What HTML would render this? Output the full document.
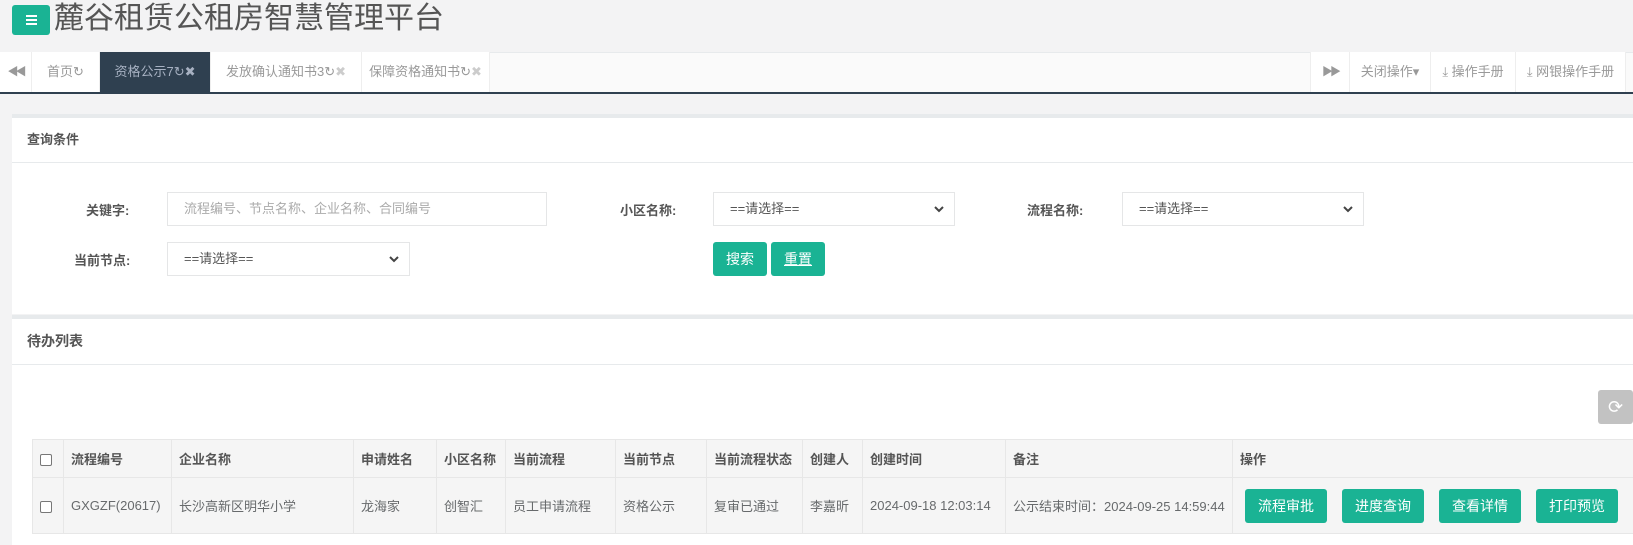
<!DOCTYPE html>
<html><head><meta charset="utf-8"><style>
*{box-sizing:border-box;margin:0;padding:0}
body{width:1633px;height:534px;overflow:hidden;background:#f3f3f4;font-family:"Liberation Sans","Noto Sans CJK SC",sans-serif;color:#676a6c;font-size:13px;position:relative}
.abs{position:absolute}
.hdr-btn{left:12px;top:5px;width:38px;height:30px;background:#1ab394;border-radius:3px}
.hdr-btn i{position:absolute;left:14px;width:11px;height:2px;background:#fff}
.title{left:54px;top:0px;font-size:30px;line-height:38px;color:#555}
.tabbar{left:0;top:52px;width:1633px;height:40px;background:#fafafa;border-top:1px solid #e7eaec}
.line{left:0;top:92px;width:1633px;height:2px;background:#2f4050}
.tab{top:52px;height:40px;line-height:40px;text-align:center;border-right:1px solid #eee;color:#999;font-size:13px;background:#fff}
.tab.act{background:#2f4050;color:#a7b1c2}
.panel{left:12px;width:1621px;background:#fff;border-top:4px solid #e7eaec}
.ph{position:absolute;left:15px;font-weight:bold;font-size:13px;color:#555}
.lbl{font-weight:bold;color:#555;font-size:13px}
.inp{border:1px solid #e5e6e7;background:#fff;height:34px;line-height:32px;padding-left:16px;color:#555;font-size:13px}
.inp.ph2{color:#aaa}
.arr{position:absolute;right:10px;top:12px}
.gbtn{background:#1ab394;color:#fff;border-radius:3px;text-align:center;font-size:14px}
table{border-collapse:collapse;table-layout:fixed;font-size:13px;color:#676a6c}
td{border:1px solid #e7e7e7;background:#f5f5f5;padding:0 7px;white-space:nowrap;overflow:hidden}
tr.h td{height:38px;font-weight:bold;color:#555}
tr.d td{height:56px}
.cb{width:12px;height:12px;border:1px solid #777;border-radius:2px;background:#fff;display:inline-block;vertical-align:middle}
.ab{display:inline-block;width:82px;height:34px;line-height:34px;margin-right:15px;font-size:14px}
</style></head><body>
<div class="abs hdr-btn"><i style="top:10px"></i><i style="top:14px"></i><i style="top:18px"></i></div>
<div class="abs title">麓谷租赁公租房智慧管理平台</div>
<div class="abs tabbar"></div>
<div class="abs tab" style="left:0;width:32px;font-size:11px;letter-spacing:-3px">◀◀</div>
<div class="abs tab" style="left:32px;width:68px">首页↻</div>
<div class="abs tab act" style="left:100px;width:111px">资格公示7↻✖</div>
<div class="abs tab" style="left:211px;width:151px">发放确认通知书3↻<span style="color:#ccc">✖</span></div>
<div class="abs tab" style="left:362px;width:128px">保障资格通知书↻<span style="color:#ccc">✖</span></div>
<div class="abs tab" style="left:1310px;width:40px;font-size:11px;letter-spacing:-3px;border-left:1px solid #eee">▶▶</div>
<div class="abs tab" style="left:1350px;width:81px">关闭操作▾</div>
<div class="abs tab" style="left:1431px;width:85px">⤓ 操作手册</div>
<div class="abs tab" style="left:1516px;width:110px">⤓ 网银操作手册</div>
<div class="abs line"></div>

<div class="abs panel" style="top:114px;height:200px">
  <div class="ph" style="top:11px">查询条件</div>
  <div class="abs" style="left:0;top:44px;width:1621px;height:1px;background:#e7eaec"></div>
</div>
<div class="abs lbl" style="left:86px;top:200px">关键字:</div>
<div class="abs inp ph2" style="left:167px;top:192px;width:380px">流程编号、节点名称、企业名称、合同编号</div>
<div class="abs lbl" style="left:620px;top:200px">小区名称:</div>
<div class="abs inp" style="left:713px;top:192px;width:242px">==请选择==<svg class="arr" width="10" height="8" viewBox="0 0 10 8"><path d="M1 2l4 4 4-4" stroke="#444" stroke-width="2" fill="none"/></svg></div>
<div class="abs lbl" style="left:1027px;top:200px">流程名称:</div>
<div class="abs inp" style="left:1122px;top:192px;width:242px">==请选择==<svg class="arr" width="10" height="8" viewBox="0 0 10 8"><path d="M1 2l4 4 4-4" stroke="#444" stroke-width="2" fill="none"/></svg></div>
<div class="abs lbl" style="left:74px;top:250px">当前节点:</div>
<div class="abs inp" style="left:167px;top:242px;width:243px">==请选择==<svg class="arr" width="10" height="8" viewBox="0 0 10 8"><path d="M1 2l4 4 4-4" stroke="#444" stroke-width="2" fill="none"/></svg></div>
<div class="abs gbtn" style="left:713px;top:242px;width:54px;height:34px;line-height:34px">搜索</div>
<div class="abs gbtn" style="left:771px;top:242px;width:54px;height:34px;line-height:34px;text-decoration:underline">重置</div>

<div class="abs panel" style="top:315px;height:230px">
  <div class="ph" style="top:12px;font-size:14px">待办列表</div>
  <div class="abs" style="left:0;top:45px;width:1621px;height:1px;background:#e7eaec"></div>
</div>
<div class="abs" style="left:1598px;top:390px;width:35px;height:34px;background:#c2c2c2;border-radius:3px;color:#fff;text-align:center;line-height:34px;font-size:18px">⟳</div>

<table class="abs" style="left:32px;top:439px;width:1610px">
<colgroup><col style="width:31px"><col style="width:108px"><col style="width:182px"><col style="width:83px"><col style="width:69px"><col style="width:110px"><col style="width:91px"><col style="width:96px"><col style="width:60px"><col style="width:143px"><col style="width:227px"><col></colgroup>
<tr class="h"><td><span class="cb"></span></td><td>流程编号</td><td>企业名称</td><td>申请姓名</td><td>小区名称</td><td>当前流程</td><td>当前节点</td><td>当前流程状态</td><td>创建人</td><td>创建时间</td><td>备注</td><td>操作</td></tr>
<tr class="d"><td><span class="cb"></span></td><td>GXGZF(20617)</td><td>长沙高新区明华小学</td><td>龙海家</td><td>创智汇</td><td>员工申请流程</td><td>资格公示</td><td>复审已通过</td><td>李嘉昕</td><td>2024-09-18 12:03:14</td><td>公示结束时间：2024-09-25 14:59:44</td><td style="padding-left:12px"><span class="gbtn ab">流程审批</span><span class="gbtn ab">进度查询</span><span class="gbtn ab">查看详情</span><span class="gbtn ab">打印预览</span></td></tr>
</table>
</body></html>
